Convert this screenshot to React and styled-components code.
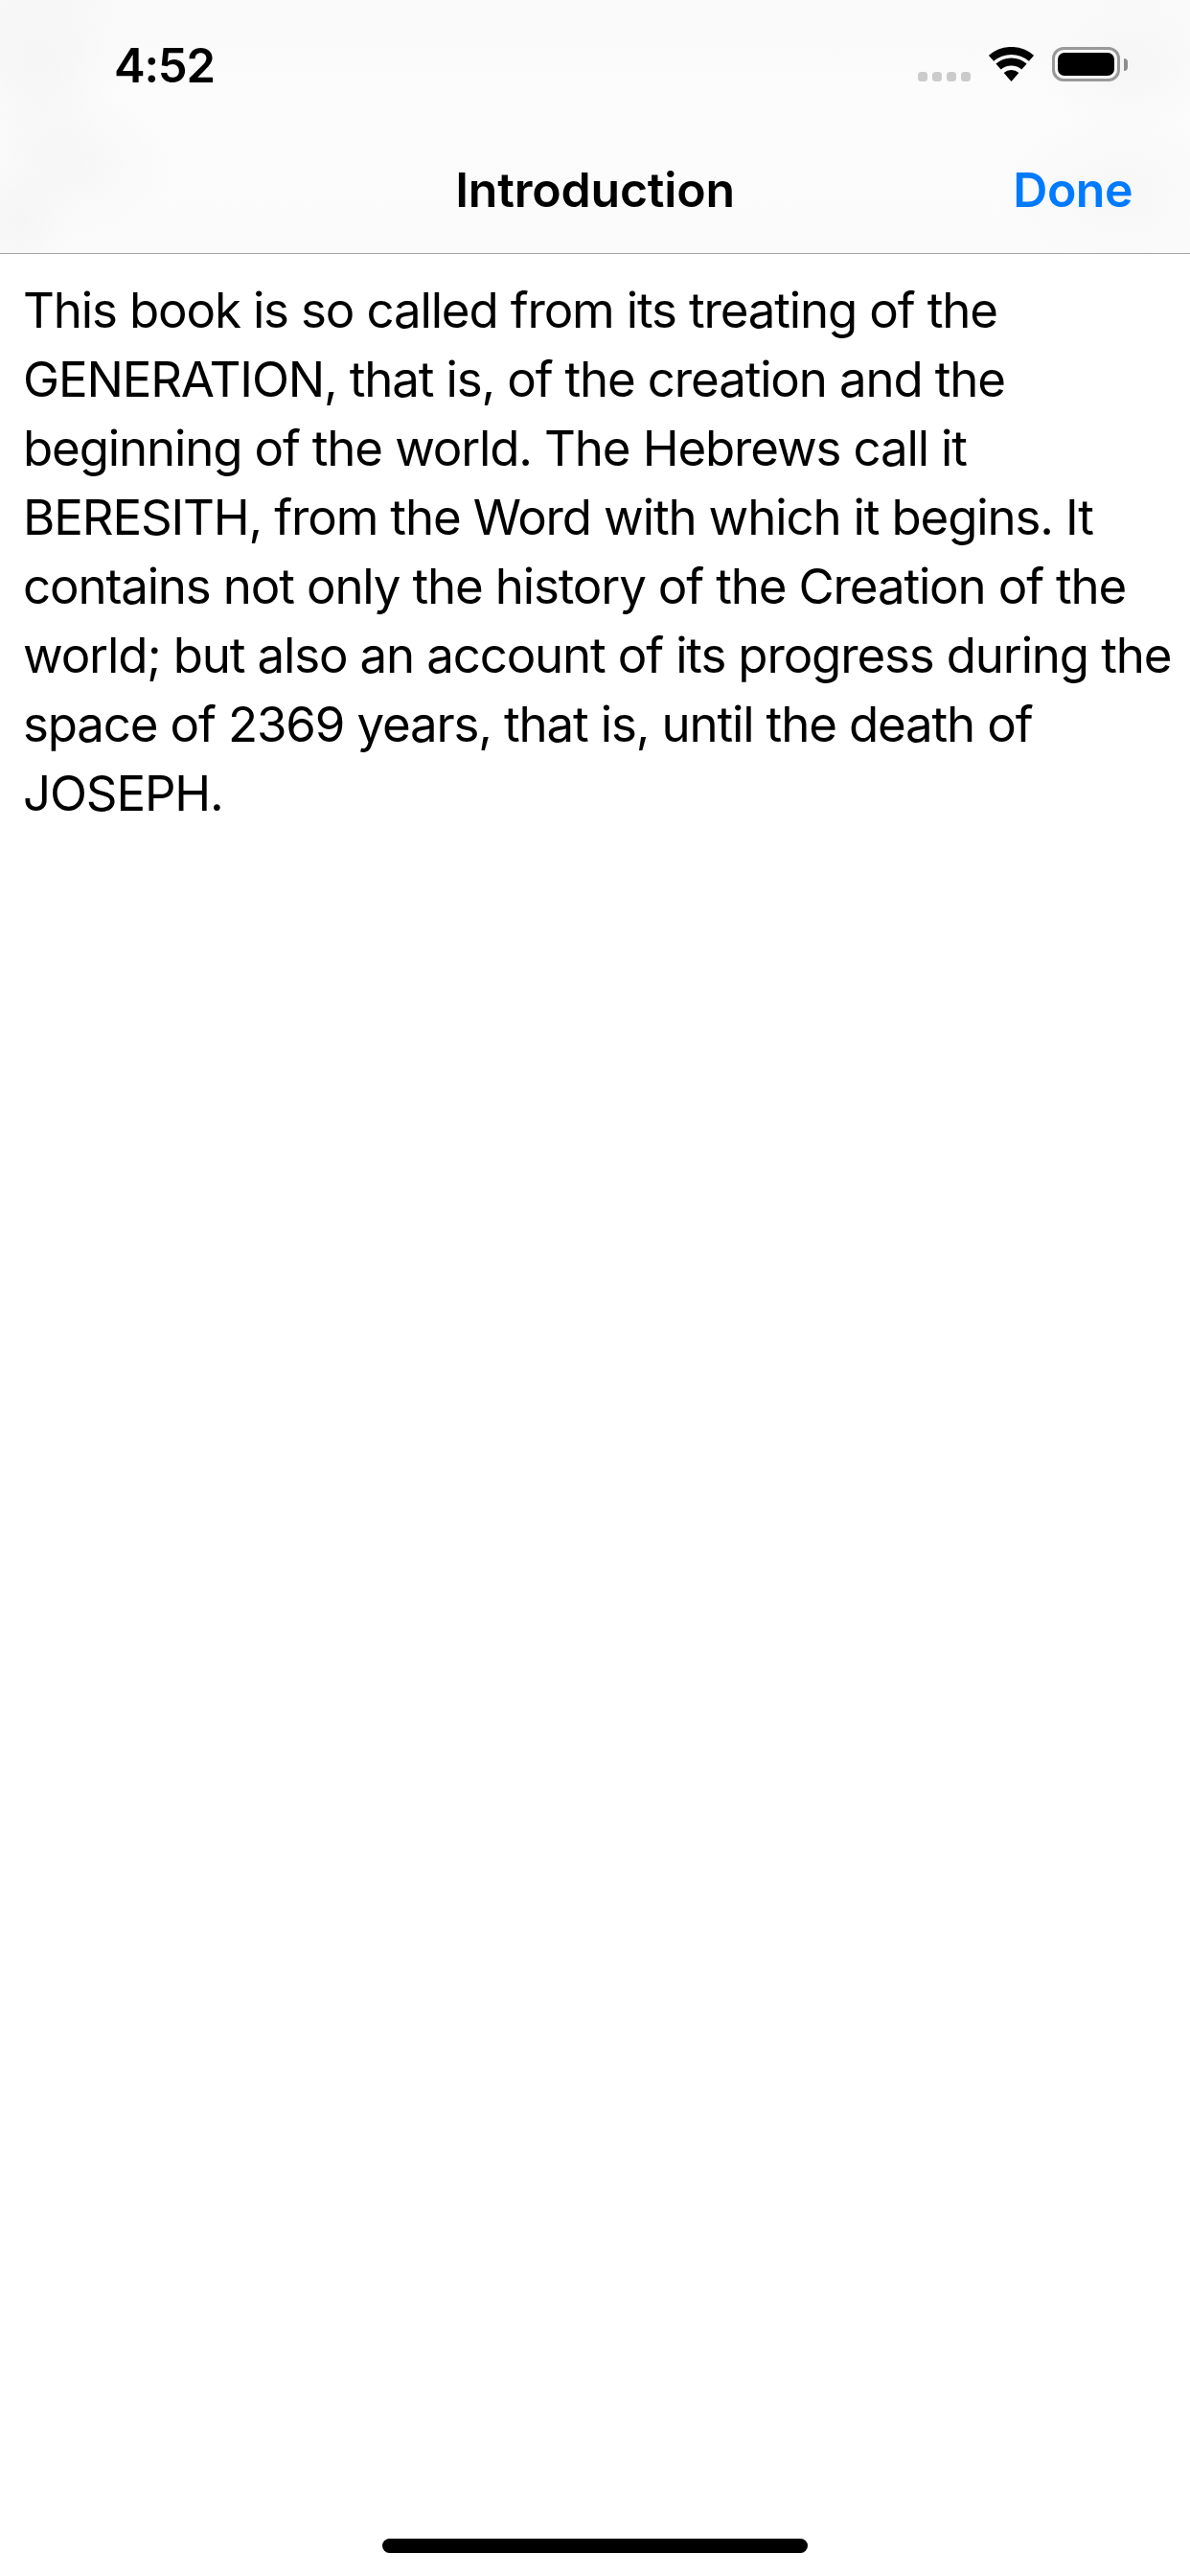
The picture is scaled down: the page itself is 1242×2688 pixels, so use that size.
import React from 'react';
import styled, { createGlobalStyle } from 'styled-components';

const GlobalStyle = createGlobalStyle`
  html, body {
    margin: 0;
    padding: 0;
    background: #fff;
  }
  * { box-sizing: border-box; }
`;

const Screen = styled.div`
  width: 1242px;
  height: 2688px;
  display: flex;
  flex-direction: column;
  background: #fff;
  color: #000;
  font-family: Inter, "Liberation Sans", sans-serif;
`;

const Header = styled.header`
  flex: none;
  height: 265px;
  display: flex;
  flex-direction: column;
  border-bottom: 1px solid #a6a6a6;
  background-color: #fbfbfb;
  background-image:
    radial-gradient(ellipse 90px 110px at 40px 60px, #f5f5f5, transparent),
    radial-gradient(ellipse 110px 80px at 70px 170px, #f6f6f6, transparent),
    radial-gradient(ellipse 60px 60px at 20px 230px, #f5f5f5, transparent),
    radial-gradient(ellipse 100px 70px at 1180px 70px, #f6f6f6, transparent),
    radial-gradient(ellipse 120px 90px at 1170px 200px, #f7f7f7, transparent),
    linear-gradient(180deg, #f9f9f9 0, #fcfcfc 100px, #fbfbfb 100%);
`;

const StatusBar = styled.div`
  height: 100px;
  display: flex;
  align-items: flex-start;
  justify-content: space-between;
  padding: 40px 73px 0 119px;
`;

const Time = styled.span`
  font-size: 49px;
  line-height: 58px;
  font-weight: 600;
  letter-spacing: -1.2px;
`;

const StatusIcons = styled.div`
  display: flex;
  align-items: flex-start;
  padding-top: 9px;
`;

const SignalDots = styled.div`
  display: flex;
  gap: 5px;
  margin: 26px 19px 0 0;
`;

const Dot = styled.i`
  display: block;
  width: 10px;
  height: 10px;
  border-radius: 3.5px;
  background: #cbcbcb;
`;

const Battery = styled.div`
  position: relative;
  width: 71px;
  height: 36px;
  margin-left: 19px;
  padding: 3px;
  border: 3px solid #999;
  border-radius: 12px;

  &::after {
    content: '';
    position: absolute;
    right: -11px;
    top: 9px;
    width: 4px;
    height: 13px;
    border-radius: 0 5px 5px 0;
    background: #8e8e8e;
  }
`;

const BatteryFill = styled.div`
  width: 100%;
  height: 100%;
  border-radius: 7px;
  background: #000;
`;

const NavBar = styled.nav`
  flex: 1;
  display: grid;
  grid-template-columns: 1fr auto 1fr;
  align-items: center;
  padding: 32px 60px 0;
`;

const NavTitle = styled.h1`
  grid-column: 2;
  margin: 0;
  font-size: 50px;
  line-height: 60px;
  font-weight: 600;
  letter-spacing: -0.2px;
`;

const DoneButton = styled.button`
  grid-column: 3;
  justify-self: end;
  padding: 0;
  border: 0;
  background: none;
  color: #007aff;
  font: 600 50px/60px Inter, "Liberation Sans", sans-serif;
  letter-spacing: -0.5px;
`;

const Body = styled.main`
  flex: 1;
  display: flex;
  flex-direction: column;
  padding: 23px 10px 0 24px;
`;

const Paragraph = styled.p`
  margin: 0;
  font-size: 51px;
  line-height: 72px;
  font-weight: 400;
  letter-spacing: -1.15px;
`;

const HomeZone = styled.div`
  flex: none;
  display: flex;
  justify-content: center;
  height: 39px;
`;

const HomeBar = styled.div`
  width: 444px;
  height: 15px;
  border-radius: 8px;
  background: #000;
`;

const WifiIcon = () => (
  <svg width="47" height="36" viewBox="0 0 47 36" fill="none">
    <path d="M2.5 11.8A32 32 0 0 1 44.5 11.8" stroke="#000" strokeWidth="8" />
    <path d="M10.05 20.5A20.5 20.5 0 0 1 36.95 20.5" stroke="#000" strokeWidth="8" />
    <path d="M23.5 36L15.6 27A12 12 0 0 1 31.4 27Z" fill="#000" />
  </svg>
);

const App = () => (
  <Screen>
    <GlobalStyle />
    <Header>
      <StatusBar>
        <Time>4:52</Time>
        <StatusIcons>
          <SignalDots>
            <Dot />
            <Dot />
            <Dot />
            <Dot />
          </SignalDots>
          <WifiIcon />
          <Battery>
            <BatteryFill />
          </Battery>
        </StatusIcons>
      </StatusBar>
      <NavBar>
        <NavTitle>Introduction</NavTitle>
        <DoneButton>Done</DoneButton>
      </NavBar>
    </Header>
    <Body>
      <Paragraph>
        This book is so called from its treating of the GENERATION, that is, of the creation and the
        beginning of the world. The Hebrews call it BERESITH, from the Word with which it begins. It
        contains not only the history of the Creation of the world; but also an account of its
        progress during the space of 2369 years, that is, until the death of JOSEPH.
      </Paragraph>
    </Body>
    <HomeZone>
      <HomeBar />
    </HomeZone>
  </Screen>
);

export default App;
